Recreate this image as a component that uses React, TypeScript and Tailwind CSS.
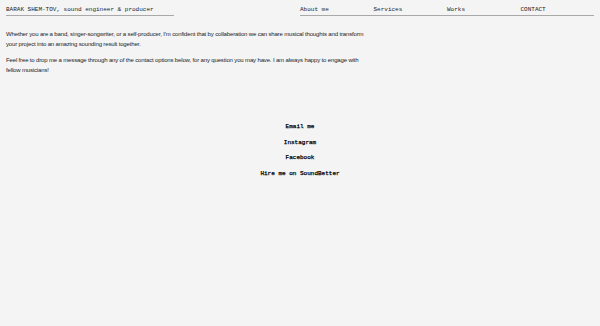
import React from "react";

const mono = { fontFamily: '"Liberation Mono", "DejaVu Sans Mono", monospace' };
const narrow = { fontFamily: '"Liberation Sans Narrow", "Liberation Sans", Arial, sans-serif' };

export default function App() {
  const nav = ["About me", "Services", "Works", "CONTACT"];
  const links = ["Email me", "Instagram", "Facebook", "Hire me on SoundBetter"];
  return (
    <div className="w-[600px] h-[326px] bg-[#f4f4f5] text-[#1c1c1c] overflow-hidden">
      <header className="flex items-end pt-[6px] px-[6px]" style={mono}>
        <div className="w-[168px] border-b border-[#a9a9a9] text-[6px] leading-[8px] pb-[1px]">
          BARAK SHEM-TOV, sound engineer &amp; producer
        </div>
        <nav className="ml-[126px] w-[294px] grid grid-cols-4 border-b border-[#a9a9a9] text-[6px] leading-[8px] pb-[1px]">
          {nav.map((n) => (
            <span key={n}>{n}</span>
          ))}
        </nav>
      </header>
      <main className="px-[6px] pt-[13px] w-[378px] text-[6px] leading-[10px] tracking-[-0.15px]" style={narrow}>
        <p>
          Whether you are a band, singer-songwriter, or a self-producer, I'm confident that by collaberation we can share musical thoughts and transform your project into an amazing sounding result together.
        </p>
        <p className="mt-[6px]">
          Feel free to drop me a message through any of the contact options below, for any question you may have. I am always happy to engage with fellow musicians!
        </p>
      </main>
      <div className="flex flex-col items-center gap-[7.6px] mt-[48px] text-[6px] leading-[8px] text-black [-webkit-text-stroke:0.25px_#000]" style={mono}>
        {links.map((l) => (
          <span key={l}>{l}</span>
        ))}
      </div>
    </div>
  );
}
